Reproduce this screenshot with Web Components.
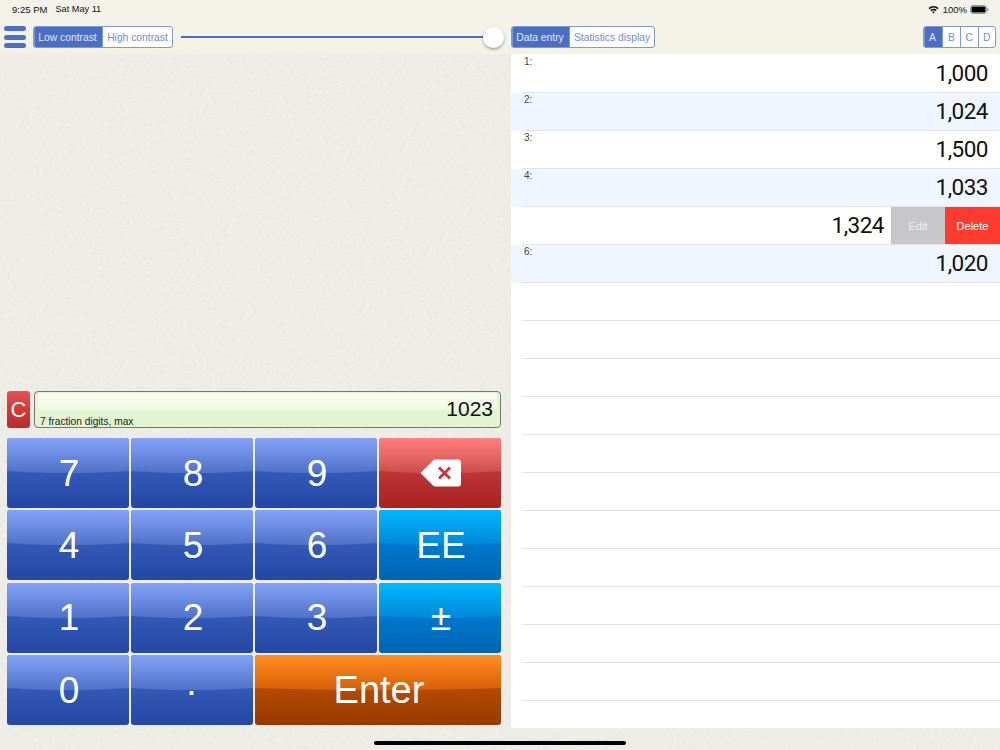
<!DOCTYPE html>
<html>
<head>
<meta charset="utf-8">
<title>Data entry</title>
<style>
  html, body { margin: 0; padding: 0; }
  body { width: 1000px; height: 750px; overflow: hidden; font-family: "Liberation Sans", Arial, sans-serif; background: #efeee8; }
</style>
</head>
<body>
<calc-app></calc-app>

<script>
class StatusBar extends HTMLElement {
  constructor(){
    super();
    this.attachShadow({mode: 'open'}).innerHTML = `
      <style>
        :host { display: flex; height: 18px; padding: 0 11px 0 12px; align-items: center; justify-content: space-between; font-size: 9.5px; color: #111; }
        .side { display: flex; align-items: center; }
        .date { margin-left: 8px; font-size: 9.2px; }
        .pct { margin: 0 3px 0 4px; font-size: 9.5px; }
        svg { display: block; }
      </style>
      <div class="side"><span>9:25 PM</span><span class="date">Sat May 11</span></div>
      <div class="side">
        <svg width="11" height="9" viewBox="0 0 11 9"><path d="M.4 3A7.2 7.2 0 0 1 10.600 3L9.500 4.200A5.600 5.600 0 0 0 1.500 4.200Z M2.300 5A4.500 4.500 0 0 1 8.700 5L7.600 6.200A3 3 0 0 0 3.400 6.200Z M4.100 7A1.900 1.900 0 0 1 6.900 7L5.500 8.500Z" fill="#111"/></svg>
        <span class="pct">100%</span>
        <svg width="19" height="9" viewBox="0 0 19 9"><rect x=".5" y=".5" width="16" height="8" rx="2.200" fill="none" stroke="#999"/><rect x="1.500" y="1.500" width="14" height="6" rx="1.300" fill="#000"/><rect x="17.300" y="3" width="1.200" height="3" rx=".6" fill="#999"/></svg>
      </div>
    `;
  }
}

class SegControl extends HTMLElement {
  constructor(){
    super();
    const items = (this.getAttribute('items') || '').split('|');
    const widths = (this.getAttribute('widths') || '').split('|');
    const html = items.map((t, i) =>
      `<span class="${i == 0 ? 'on' : ''}" style="width:${widths[i]}px">${t}</span>`).join('');
    this.attachShadow({mode: 'open'}).innerHTML = `
      <style>
        :host { display: inline-flex; height: 22px; box-sizing: border-box; border: 1px solid #7f9adb; border-radius: 3px; overflow: hidden; background: #fff; font-size: 10.3px; color: #6f8ddb; }
        span { display: flex; align-items: center; justify-content: center; box-sizing: border-box; border-left: 1px solid #7f9adb; }
        span:first-child { border-left: 0; }
        .on { background: #4a6ec4; color: #e4e9f6; padding-right: 2px; }
      </style>
      ${html}
    `;
  }
}

class MenuIcon extends HTMLElement {
  constructor(){
    super();
    this.attachShadow({mode: 'open'}).innerHTML = `
      <style>
        :host { display: flex; flex-direction: column; justify-content: space-between; width: 22px; height: 22px; }
        i { display: block; height: 5px; border-radius: 2.500px; background: #4a6fc8; }
      </style>
      <i></i><i></i><i></i>
    `;
  }
}

class RangeSlider extends HTMLElement {
  constructor(){
    super();
    this.attachShadow({mode: 'open'}).innerHTML = `
      <style>
        :host { display: flex; align-items: center; position: relative; height: 22px; }
        .line { flex: 1; height: 2px; background: #4a6ec4; }
        .knob { position: absolute; right: -13.500px; top: .5px; width: 21px; height: 21px; border-radius: 50%; background: #fff; box-shadow: 0 1.500px 3px rgba(0,0,0,.35); }
      </style>
      <div class="line"></div><div class="knob"></div>
    `;
  }
}

class AppHeader extends HTMLElement {
  constructor(){
    super();
    this.attachShadow({mode: 'open'}).innerHTML = `
      <style>
        :host { display: block; height: 54px; box-sizing: border-box; background: linear-gradient(#f3f2ea, #f5f3e6 70%, #f4f2e4); }
        .tools { display: flex; align-items: center; margin-top: 8px; height: 22px; padding: 0 4px 0 4px; }
        menu-icon { margin-right: 7px; }
        range-slider { flex: 0 0 309px; margin: 0 21px 0 8px; }
        .gap { flex: 1; }
      </style>
      <status-bar></status-bar>
      <div class="tools">
        <menu-icon></menu-icon>
        <seg-control items="Low contrast|High contrast" widths="68|70"></seg-control>
        <range-slider></range-slider>
        <seg-control items="Data entry|Statistics display" widths="57|85"></seg-control>
        <div class="gap"></div>
        <seg-control items="A|B|C|D" widths="18|18|17.500|17.500"></seg-control>
      </div>
    `;
  }
}

class CalcKey extends HTMLElement {
  constructor(){
    super();
    this.attachShadow({mode: 'open'}).innerHTML = `
      <style>
        :host { --top: #82a3f7; --mid: #5071c8; --low: #3459b6; --end: #2347a3;
          display: flex; align-items: center; justify-content: center; position: relative; overflow: hidden;
          border-radius: 3px; color: #fff; font-size: 37px;
          background: linear-gradient(var(--low), var(--low) 48%, var(--end)); }
        :host([kind=red]) { --top: #ff8080; --mid: #cf4c4c; --low: #bd3536; --end: #a92222; }
        :host([kind=cyan]) { --top: #00b8ff; --mid: #0088d8; --low: #0078cc; --end: #0064b4; }
        :host([kind=orange]) { --top: #ff8e22; --mid: #d66004; --low: #b54a02; --end: #963a00; font-size: 38px; }
        .gloss { position: absolute; left: -20%; right: -20%; top: 0; height: 50%; border-radius: 0 0 50% 50% / 0 0 20% 20%; background: linear-gradient(var(--top), var(--mid)); }
        .txt { position: relative; line-height: 1; padding-left: 2px; }
      </style>
      <div class="gloss"></div>
      <div class="txt"><slot></slot></div>
    `;
  }
}

class KeyPad extends HTMLElement {
  constructor(){
    super();
    this.attachShadow({mode: 'open'}).innerHTML = `
      <style>
        :host { display: grid; grid-template-columns: repeat(4, 122px); grid-template-rows: repeat(4, 70px); column-gap: 2px; row-gap: 2.330px; }
        .wide { grid-column: span 2; }
        .dot { margin-left: -3px; }
        svg { display: block; }
      </style>
      <calc-key>7</calc-key><calc-key>8</calc-key><calc-key>9</calc-key>
      <calc-key kind="red">
        <svg width="42" height="28" viewBox="0 0 42 28"><path d="M0.500 14L13 1.500Q14 .5 15.500 .5H38Q41 .5 41 3.500V24.500Q41 27.500 38 27.500H15.500Q14 27.500 13 26.500Z" fill="#fff"/><path d="M19 8.500L30 19.500M30 8.500L19 19.500" stroke="#c8393c" stroke-width="3" fill="none"/></svg>
      </calc-key>
      <calc-key>4</calc-key><calc-key>5</calc-key><calc-key>6</calc-key><calc-key kind="cyan">EE</calc-key>
      <calc-key>1</calc-key><calc-key>2</calc-key><calc-key>3</calc-key><calc-key kind="cyan">±</calc-key>
      <calc-key>0</calc-key><calc-key><span class="dot">·</span></calc-key><calc-key class="wide" kind="orange">Enter</calc-key>
    `;
  }
}

class NumberDisplay extends HTMLElement {
  constructor(){
    super();
    this.attachShadow({mode: 'open'}).innerHTML = `
      <style>
        :host { display: flex; gap: 4px; height: 37px; }
        .clear { display: flex; align-items: center; justify-content: center; width: 23px; border-radius: 3px; color: #fff; font-size: 22px; background: linear-gradient(#e65252, #d23a3a 50%, #b82c2e); }
        .field { flex: 1; position: relative; box-sizing: border-box; border: 2px solid #77776f; border-width: 1.500px 1px 1px 1.500px; border-radius: 4px; background: #e2f4d0; overflow: hidden; }
        .shine { position: absolute; left: 3px; right: 3px; top: 1px; height: 17px; border-radius: 3px; background: linear-gradient(#f9fef2, #eef9e2); }
        .val { position: absolute; right: 7px; top: 6px; font-size: 21px; line-height: 22px; color: #111; }
        .note { position: absolute; left: 5px; bottom: -1px; font-size: 10.200px; line-height: 12px; color: #222; }
      </style>
      <div class="clear">C</div>
      <div class="field">
        <div class="shine"></div>
        <div class="val">1023</div>
        <div class="note">7 fraction digits, max</div>
      </div>
    `;
  }
}

class DataRow extends HTMLElement {
  constructor(){
    super();
    const n = this.getAttribute('n');
    const v = this.getAttribute('value') || '';
    const swiped = this.hasAttribute('swiped');
    this.attachShadow({mode: 'open'}).innerHTML = `
      <style>
        :host { display: flex; height: 38px; position: relative; box-sizing: border-box; padding-left: 11px; }
        :host([alt]) { background: #eff6ff; }
        .in { flex: 1; display: flex; position: relative; border-bottom: 1px solid #e4e4e6; }
        .n { position: absolute; left: 2px; top: 1px; font-size: 10px; line-height: 11px; color: #444; }
        .v { margin-left: auto; padding: 6px 12px 0 0; font-family: Roboto, "Liberation Sans", sans-serif; font-size: 22.500px; line-height: 24px; letter-spacing: -.5px; color: #111; }
        .swiped .v { padding-right: 7px; }
        .act { width: 54px; display: flex; align-items: center; justify-content: center; font-size: 11px; color: #fff; }
        .edit { background: #c7c6cb; color: #eee; margin-left: 0; }
        .del { background: #ff3b30; width: 55px; }
      </style>
      <div class="in ${swiped ? 'swiped' : ''}">
        ${swiped || !v ? '' : `<span class="n">${n}:</span>`}
        <span class="v">${v}</span>
        ${swiped ? '<span class="act edit">Edit</span><span class="act del">Delete</span>' : ''}
      </div>
    `;
  }
}

class DataTable extends HTMLElement {
  constructor(){
    super();
    const vals = ['1,000', '1,024', '1,500', '1,033', '1,324', '1,020'];
    let rows = '';
    for (let i = 0; i < 17; i++) {
      const alt = i < 6 && i % 2 == 1 ? 'alt' : '';
      const sw = i == 4 ? 'swiped' : '';
      rows += `<data-row n="${i + 1}" value="${vals[i] || ''}" ${alt} ${sw}></data-row>`;
    }
    this.attachShadow({mode: 'open'}).innerHTML = `
      <style>
        :host { display: block; height: 674px; box-sizing: border-box; padding-top: 1px; overflow: hidden; background: #fff; border-radius: 2px 2px 0 2px; }
      </style>
      ${rows}
    `;
  }
}

class CalcApp extends HTMLElement {
  constructor(){
    super();
    this.attachShadow({mode: 'open'}).innerHTML = `
      <style>
        :host { display: block; position: relative; width: 1000px; height: 750px; overflow: hidden; background: #efeee8; }
        .grain { position: absolute; inset: 0; width: 1000px; height: 750px; }
        .page { position: relative; }
        .main { display: grid; grid-template-columns: 511px 489px; height: 696px; }
        .left { display: flex; flex-direction: column; justify-content: flex-end; gap: 10px; padding: 0 10px 25px 7px; }
        .home { position: absolute; left: 374px; top: 741px; width: 252px; height: 3.500px; border-radius: 2px; background: #000; }
      </style>
      <svg class="grain" aria-hidden="true">
        <filter id="leather" x="0" y="0" width="100%" height="100%">
          <feTurbulence type="fractalNoise" baseFrequency=".3 .38" numOctaves="2" seed="4"/>
          <feColorMatrix values="0 0 0 0 .62  0 0 0 0 .62  0 0 0 0 .6  .9 .5 0 0 -.5"/>
        </filter>
        <rect width="1000" height="750" filter="url(#leather)" opacity=".3"/>
      </svg>
      <div class="page">
        <app-header></app-header>
        <div class="main">
          <div class="left">
            <number-display></number-display>
            <key-pad></key-pad>
          </div>
          <data-table></data-table>
        </div>
      </div>
      <div class="home"></div>
    `;
  }
}

customElements.define('status-bar', StatusBar);
customElements.define('seg-control', SegControl);
customElements.define('menu-icon', MenuIcon);
customElements.define('range-slider', RangeSlider);
customElements.define('app-header', AppHeader);
customElements.define('calc-key', CalcKey);
customElements.define('key-pad', KeyPad);
customElements.define('number-display', NumberDisplay);
customElements.define('data-row', DataRow);
customElements.define('data-table', DataTable);
customElements.define('calc-app', CalcApp);
</script>
</body>
</html>
